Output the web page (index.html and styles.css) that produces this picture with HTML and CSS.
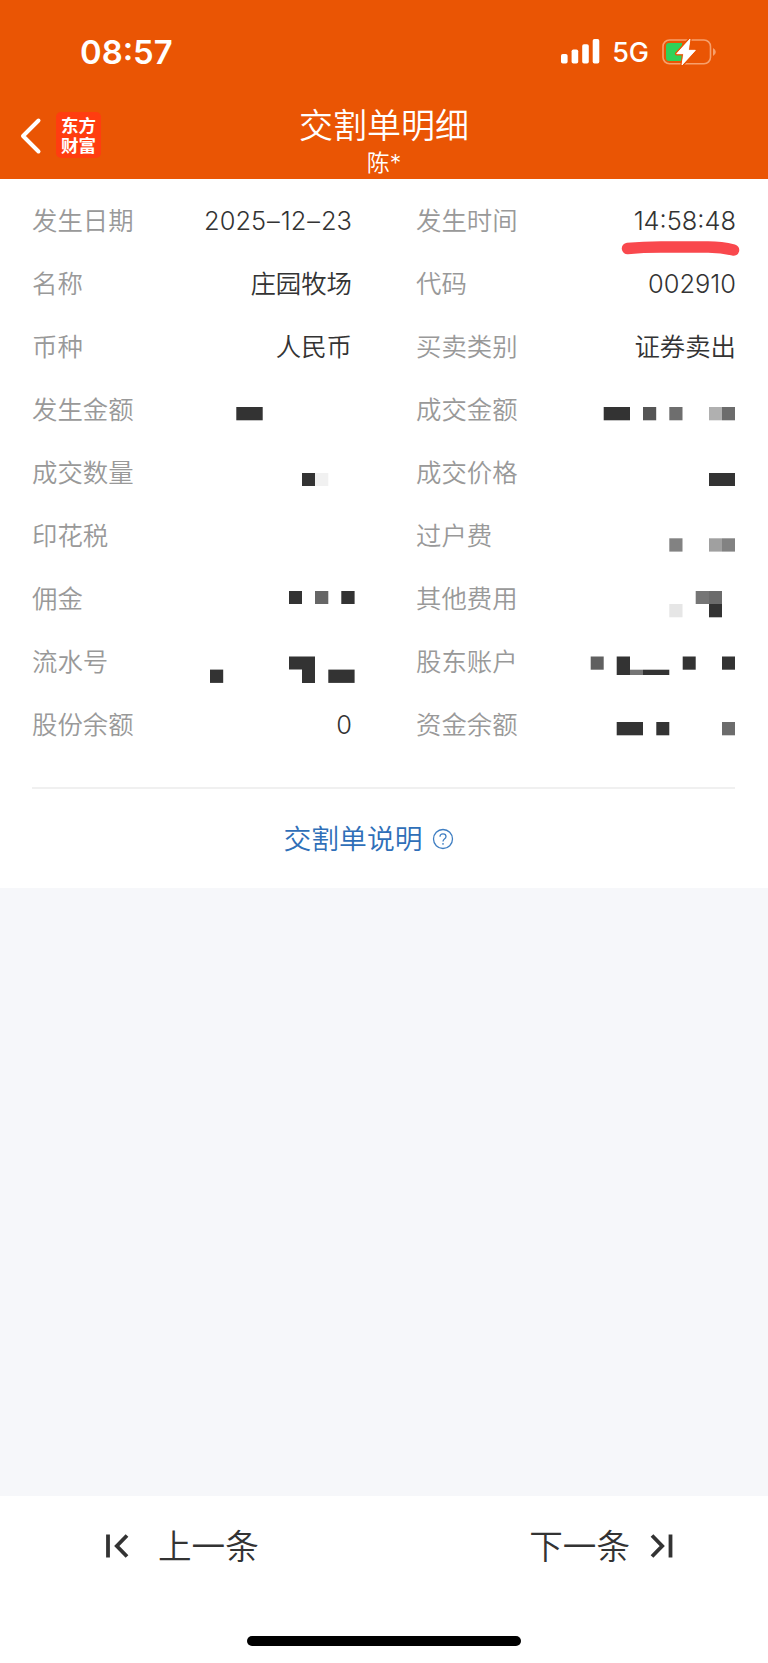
FILE: index.html
```
<!DOCTYPE html>
<html lang="zh-CN">

<head>
    <meta charset="UTF-8">
    <meta name="viewport" content="width=device-width, initial-scale=1.0">
    <title>交割单明细</title>
    <link rel="stylesheet" href="styles.css">
</head>

<body>
    <header class="header">
        <!-- Status Bar -->
        <div class="status-bar">
            <span class="clock">08:57</span>
            <div class="status-icons">
                <svg class="signal" width="39" height="25" viewBox="0 0 39 25" fill="#fff">
                    <rect x="0" y="15" width="6.6" height="9.5" rx="1.8" />
                    <rect x="10.6" y="10.5" width="6.6" height="14" rx="1.8" />
                    <rect x="21.2" y="5.3" width="6.6" height="19.2" rx="1.8" />
                    <rect x="31.7" y="0" width="6.6" height="24.5" rx="1.8" />
                </svg>
                <span class="network">5G</span>
                <svg class="battery" width="54" height="28" viewBox="0 0 54 28">
                    <rect x="1" y="2" width="47.5" height="23.8" rx="6.5" fill="none" stroke="#f7a06c" stroke-width="1.6" />
                    <path d="M51 10 Q53.8 11.5 53.8 14 Q53.8 16.5 51 18 Z" fill="#f7a06c" />
                    <path d="M7 5 H20 V23 H7 Q4 23 4 20 V8 Q4 5 7 5 Z" fill="#30d158" />
                    <path d="M28 1 L14.7 15.7 H21.7 L20 27 L33.4 12.3 H26.4 Z" fill="#fff" stroke="#ea5504" stroke-width="3.4" stroke-linejoin="round" paint-order="stroke" />
                    <path d="M28 1 L14.7 15.7 H21.7 L20 27 L33.4 12.3 H26.4 Z" fill="#fff" stroke="#fff" stroke-width="0.8" stroke-linejoin="round" />
                </svg>
            </div>
        </div>

        <!-- Nav Bar -->
        <div class="nav-bar">
            <div class="nav-left">
                <svg class="back" width="22" height="38" viewBox="0 0 22 38">
                    <path d="M18.5 3.500 L3 19 L18.5 34.500" fill="none" stroke="#fff" stroke-width="4" stroke-linecap="round" stroke-linejoin="round" />
                </svg>
                <div class="logo">东方<br>财富</div>
            </div>
            <div class="nav-title">
                <h1>交割单明细</h1>
                <p>陈*</p>
            </div>
            <div class="nav-right"></div>
        </div>
    </header>

    <main class="card">
        <div class="detail-grid">
            <div class="row"><span class="label">发生日期</span><span class="value">2025<span class="dash">–</span>12<span class="dash">–</span>23</span></div>
            <div class="row">
                <span class="label">发生时间</span><span class="value">14:58:48</span>
                <svg class="marker" width="120" height="18" viewBox="0 0 120 18">
                    <path d="M6.5 9.5 Q22 8 40 8 H84 Q99 7.600 112.500 11" fill="none" stroke="#f9484d" stroke-width="11.5" stroke-linecap="round" />
                </svg>
            </div>

            <div class="row"><span class="label">名称</span><span class="value">庄园牧场</span></div>
            <div class="row"><span class="label">代码</span><span class="value">002910</span></div>

            <div class="row"><span class="label">币种</span><span class="value">人民币</span></div>
            <div class="row"><span class="label">买卖类别</span><span class="value">证券卖出</span></div>

            <!-- Masked values -->
            <div class="row">
                <span class="label">发生金额</span>
                <svg class="mask" viewBox="0 0 200 63">
                    <rect x="84.300" y="28" width="26.400" height="13.300" />
                </svg>
            </div>
            <div class="row">
                <span class="label">成交金额</span>
                <svg class="mask" viewBox="0 0 200 63">
                    <rect x="68.700" y="28" width="26.300" height="13.300" />
                    <rect x="108" y="28" width="13.200" height="13.300" fill="#555" />
                    <rect x="134.300" y="28" width="13.200" height="13.300" fill="#6e6e6e" />
                    <rect x="174" y="28" width="13" height="13.300" fill="#b0b0b0" />
                    <rect x="187" y="28" width="13" height="13.300" fill="#6c6c6c" />
                </svg>
            </div>

            <div class="row">
                <span class="label">成交数量</span>
                <svg class="mask" viewBox="0 0 200 63">
                    <rect x="150" y="31" width="13" height="13" />
                    <rect x="163" y="31" width="13.300" height="13" fill="#f1f1f1" />
                </svg>
            </div>
            <div class="row">
                <span class="label">成交价格</span>
                <svg class="mask" viewBox="0 0 200 63">
                    <rect x="174" y="31" width="26" height="13" />
                </svg>
            </div>

            <div class="row"><span class="label">印花税</span></div>
            <div class="row">
                <span class="label">过户费</span>
                <svg class="mask" viewBox="0 0 200 63">
                    <rect x="134.300" y="33.300" width="13.200" height="13.300" fill="#828282" />
                    <rect x="174" y="33.300" width="13" height="13.300" fill="#a0a0a0" />
                    <rect x="187" y="33.300" width="13" height="13.300" fill="#828282" />
                </svg>
            </div>

            <div class="row">
                <span class="label">佣金</span>
                <svg class="mask" viewBox="0 0 200 63">
                    <rect x="137" y="23" width="13" height="13" />
                    <rect x="163" y="23" width="13.300" height="13" fill="#666" />
                    <rect x="189.300" y="23" width="13.300" height="13" />
                </svg>
            </div>
            <div class="row">
                <span class="label">其他费用</span>
                <svg class="mask" viewBox="0 0 200 63">
                    <rect x="160.700" y="23" width="13.300" height="13" fill="#757575" />
                    <rect x="174" y="23" width="13" height="13" fill="#6b6b6b" />
                    <rect x="174" y="36" width="13" height="13.300" />
                    <rect x="134.300" y="36" width="13.200" height="13.300" fill="#e6e6e6" />
                </svg>
            </div>

            <div class="row">
                <span class="label">流水号</span>
                <svg class="mask" viewBox="0 0 200 63">
                    <rect x="58" y="38.600" width="13.200" height="13.300" />
                    <path d="M137 25.500 H163 V51.900 H150 V38.600 H137 Z" />
                    <rect x="176.300" y="38.600" width="26.300" height="13.300" />
                </svg>
            </div>
            <div class="row">
                <span class="label">股东账户</span>
                <svg class="mask" viewBox="0 0 200 63">
                    <rect x="55.700" y="25.500" width="13" height="13.200" fill="#606060" />
                    <rect x="81.700" y="25.500" width="13.300" height="18.500" />
                    <rect x="95" y="38.700" width="13" height="5.300" fill="#757575" />
                    <rect x="108" y="38.700" width="26.300" height="5.300" />
                    <rect x="147.700" y="25.500" width="13" height="13.200" />
                    <rect x="187" y="25.500" width="13" height="13.200" />
                </svg>
            </div>

            <div class="row"><span class="label">股份余额</span><span class="value">0</span></div>
            <div class="row">
                <span class="label">资金余额</span>
                <svg class="mask" viewBox="0 0 200 63">
                    <rect x="81.700" y="28" width="26.300" height="13.300" />
                    <rect x="121.300" y="28" width="13" height="13.300" />
                    <rect x="187" y="28" width="13" height="13.300" fill="#6c6c6c" />
                </svg>
            </div>
        </div>

        <div class="explain">
            <span>交割单说明</span>
            <svg width="22" height="22" viewBox="0 0 22 22" fill="none" stroke="#3f7ec2" stroke-width="1.300">
                <circle cx="11" cy="11" r="9.500" />
                <path d="M8 8.800 Q8 5.800 11 5.800 Q14 5.800 14 8.500 Q14 10 12.400 11 Q11 12 11 13.600" />
                <path d="M11 15 V16.700" />
            </svg>
        </div>
    </main>

    <footer class="footer">
        <div class="pager">
            <div class="prev">
                <svg width="23" height="24" viewBox="0 0 23 24" fill="none" stroke="#333" stroke-width="3.800">
                    <path d="M2 0.500 V23.500" />
                    <path d="M21 1.500 L10.800 12 L21 22.500" />
                </svg>
                <span>上一条</span>
            </div>
            <div class="next">
                <span>下一条</span>
                <svg width="23" height="24" viewBox="0 0 23 24" fill="none" stroke="#333" stroke-width="3.800">
                    <path d="M2 1.500 L12.200 12 L2 22.500" />
                    <path d="M20.500 0.500 V23.500" />
                </svg>
            </div>
        </div>
        <div class="home-indicator"></div>
    </footer>
</body>

</html>
```
FILE: styles.css
```
* {
    box-sizing: border-box;
}

body {
    font-family: Inter, "Noto Sans CJK SC", sans-serif;
    background-color: #f6f7fa;
    display: flex;
    flex-direction: column;
    height: 1663px;
    margin: 0;
    color: #333;
}

svg {
    display: block;
    flex-shrink: 0;
}

.header {
    height: 179px;
    background-color: #ea5504;
    color: #fff;
}

.status-bar {
    display: flex;
    justify-content: space-between;
    align-items: center;
    height: 103px;
    padding: 0 52px 0 80px;
}

.clock {
    font-size: 32.8px;
    font-weight: 600;
    line-height: 40px;
}

.status-icons {
    display: flex;
    align-items: center;
}

.network {
    margin: 2px 13px 0 12px;
    font-size: 27px;
    font-weight: 450;
    line-height: 32px;
}

.nav-bar {
    display: flex;
    height: 76px;
}

.nav-left,
.nav-right {
    display: flex;
    width: 200px;
}

.nav-left {
    padding: 9px 0 0 20px;
}

.back {
    margin-top: 5px;
}

.logo {
    width: 45px;
    height: 46px;
    margin-left: 14px;
    padding-top: 4px;
    border-radius: 5px;
    background-color: #ff3d10;
    font-size: 17.5px;
    font-weight: 700;
    line-height: 19.5px;
    text-align: center;
}

.nav-title {
    flex: 1;
    padding-top: 1px;
    text-align: center;
}

.nav-title h1 {
    margin: 0;
    font-size: 34px;
    font-weight: 350;
    line-height: 44px;
}

.nav-title p {
    margin: 0;
    font-size: 23px;
    font-weight: 350;
    line-height: 30px;
}

.card {
    height: 709px;
    padding: 11px 33px 0 32px;
    background-color: #fff;
}

.detail-grid {
    display: grid;
    grid-template-columns: 320px 319px;
    grid-auto-rows: 63px;
    column-gap: 64px;
    height: 599px;
    border-bottom: 2px solid #f0f0f0;
}

.row {
    position: relative;
    display: flex;
    justify-content: space-between;
    align-items: center;
    font-size: 25.4px;
    font-weight: 350;
    line-height: 36px;
}

.label,
.value {
    margin-bottom: 2px;
}

.label {
    color: #999;
}

.row:nth-child(even) .value {
    margin-right: -1px;
}

.dash {
    margin: 0 1px;
}

.mask {
    width: 200px;
    height: 63px;
    fill: #333;
    overflow: visible;
}

/* hand-drawn underline over the time */
.marker {
    position: absolute;
    right: -6px;
    bottom: -4px;
}

.explain {
    display: flex;
    align-items: center;
    justify-content: center;
    gap: 9px;
    height: 99px;
    padding-right: 30px;
    color: #2f6fb8;
    font-size: 27.8px;
    font-weight: 350;
}

.explain span {
    margin-bottom: 3px;
}

.footer {
    display: flex;
    flex-direction: column;
    align-items: center;
    justify-content: space-between;
    height: 167px;
    margin-top: auto;
    padding-bottom: 17px;
    background-color: #fff;
}

.pager {
    display: flex;
    justify-content: space-between;
    width: 100%;
    height: 100px;
    padding: 0 95px 0 106px;
    font-size: 33.6px;
    font-weight: 350;
}

.pager span {
    margin-bottom: 4px;
}

.prev,
.next {
    display: flex;
    align-items: center;
}

.prev {
    gap: 29px;
}

.next {
    gap: 20px;
}

.home-indicator {
    width: 274px;
    height: 10px;
    border-radius: 5px;
    background-color: #000;
}
```
